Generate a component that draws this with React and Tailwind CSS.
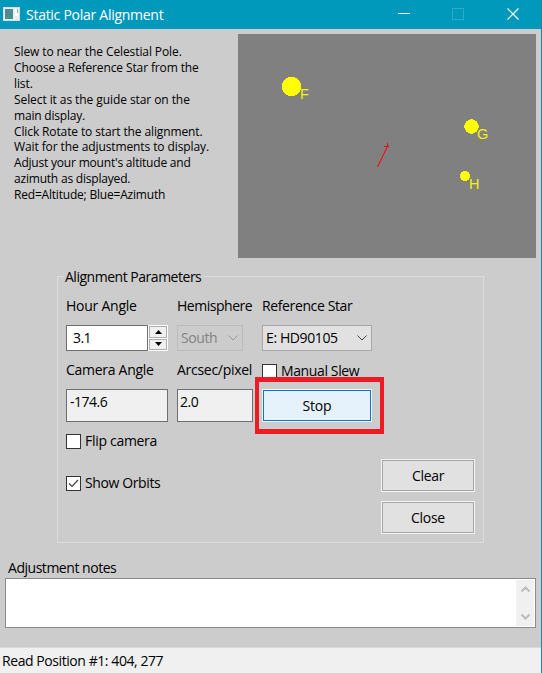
import React from "react";

const instructions = [
  ["Slew to near the Celestial Pole.", "tracking-[-0.1px]"],
  ["Choose a Reference Star from the", "tracking-[-0.12px]"],
  ["list.", "tracking-[-0.1px]"],
  ["Select it as the guide star on the", "tracking-[-0.08px]"],
  ["main display.", "tracking-[-0.2px]"],
  ["Click Rotate to start the alignment.", "tracking-[-0.12px]"],
  ["Wait for the adjustments to display.", "tracking-[-0.1px]"],
  ["Adjust your mount's altitude and", "tracking-[-0.2px]"],
  ["azimuth as displayed.", "tracking-[-0.2px]"],
  ["Red=Altitude; Blue=Azimuth", "tracking-[-0.2px]"],
];

function TitleBar() {
  return (
    <header className="flex h-[29px] shrink-0 items-center bg-[#0099bc] pl-[3px] text-white">
      <svg width="18" height="15" viewBox="0 0 18 15">
        <rect x="0.5" y="0.5" width="16" height="13" fill="#e9eef0" stroke="#d5dde0" />
        <rect x="2" y="2" width="8" height="10" fill="#4a8f88" />
        <rect x="2" y="2" width="4" height="5" fill="#5a7fa5" />
        <rect x="12" y="2" width="3" height="7" fill="#fff" />
        <rect x="14" y="2" width="1" height="4" fill="#9aa" />
      </svg>
      <h1 className="ml-[5px] text-[14px] tracking-[-0.27px]">Static Polar Alignment</h1>
      <svg className="ml-auto mr-[21px]" width="122" height="13" viewBox="0 0 122 13" fill="none">
        <path d="M0 5.500h12" stroke="#fff" />
        <rect x="54.500" y="0.500" width="11" height="11" stroke="#2eabc8" />
        <path d="M109.500 0.500l11 11M120.500 0.500l-11 11" stroke="#fff" strokeWidth="1.2" />
      </svg>
    </header>
  );
}

function StarView() {
  return (
    <svg className="block shrink-0 bg-[#808080]" width="298" height="224" viewBox="0 0 298 224">
      <g fill="#ff0" shapeRendering="crispEdges">
        <circle cx="53.5" cy="52.5" r="9.8" />
        <circle cx="233.5" cy="92.5" r="7.3" />
        <circle cx="227" cy="142" r="5.1" />
      </g>
      <g fill="#ff0" fontFamily="'Liberation Sans', Arial, sans-serif" fontSize="14.5" opacity="0.9">
        <text x="62" y="65">F</text>
        <text x="239" y="105">G</text>
        <text x="231" y="155">H</text>
      </g>
      <path d="M139.500 133L149.500 112.500" stroke="#f01010" strokeWidth="1.1" />
      <path d="M149.500 109v4M146 112.500h5" stroke="#e01010" />
    </svg>
  );
}

function Check({ label, checked, tracking }) {
  return (
    <label className="flex h-[16px] items-center gap-[4px]">
      <span className="flex h-[15px] w-[15px] items-center justify-center border border-[#333] bg-white">
        {checked && (
          <svg width="11" height="9" viewBox="0 0 11 9" fill="none">
            <path d="M1 4.500l3 3L10 1" stroke="#444" strokeWidth="1.2" />
          </svg>
        )}
      </span>
      <span className={tracking}>{label}</span>
    </label>
  );
}

function Chevron({ color }) {
  return (
    <svg width="10" height="6" viewBox="0 0 10 6" fill="none">
      <path d="M0.500 0.500L5 5L9.500 0.500" stroke={color} />
    </svg>
  );
}

function Spinner() {
  return (
    <div className="flex h-[26px] w-[102px]">
      <div className="flex w-[82px] items-center border border-[#6f6f6f] bg-white pl-[6px] tracking-[-0.6px]">3.1</div>
      <div className="flex flex-1 flex-col gap-px bg-white p-px">
        <span className="flex flex-1 items-center justify-center border border-[#adadad] bg-[#f0f0f0]">
          <svg width="7" height="4" viewBox="0 0 7 4"><path d="M0 4L3.500 0L7 4z" /></svg>
        </span>
        <span className="flex flex-1 items-center justify-center border border-[#adadad] bg-[#f0f0f0]">
          <svg width="7" height="4" viewBox="0 0 7 4"><path d="M0 0L3.500 4L7 0z" /></svg>
        </span>
      </div>
    </div>
  );
}

function PushButton({ children }) {
  return (
    <button className="h-[33px] w-[94px] border border-[#f4f4f4] bg-[#e1e1e1]">
      <span className="flex h-full items-center justify-center border border-[#a6a6a6] tracking-[-0.3px]">{children}</span>
    </button>
  );
}

function Parameters() {
  return (
    <fieldset className="ml-[57px] h-[277px] w-[427px] border border-[#dcdcdc] pl-[8px]">
      <legend className="-ml-[2px] h-[20px] px-[1px] leading-[22px] tracking-[-0.48px]">Alignment Parameters</legend>
      <div className="mt-[10px] grid h-[20px] grid-cols-[111px_85px_1fr] leading-[20px]">
        <span className="tracking-[-0.25px]">Hour Angle</span>
        <span className="tracking-[-0.48px]">Hemisphere</span>
        <span className="tracking-[-0.38px]">Reference Star</span>
      </div>
      <div className="mt-[9px] grid h-[26px] grid-cols-[111px_85px_1fr]">
        <Spinner />
        <div className="flex w-[66px] items-center justify-between border border-[#bcbcbc] bg-[#cccccc] pl-[3px] pr-[4px] tracking-[-0.4px] text-[#838383]">
          South <Chevron color="#999" />
        </div>
        <div className="flex w-[110px] items-center justify-between border border-[#a9a9a9] bg-[#e1e1e1] pl-[3px] pr-[4px] tracking-[-0.4px]">
          E: HD90105 <Chevron color="#444" />
        </div>
      </div>
      <div className="mt-[9px] grid h-[20px] grid-cols-[111px_85px_1fr] leading-[20px]">
        <span className="tracking-[-0.28px]">Camera Angle</span>
        <span className="tracking-[-0.28px]">Arcsec/pixel</span>
        <div className="pt-[3px]"><Check label="Manual Slew" tracking="tracking-[-0.38px]" /></div>
      </div>
      <div className="mt-[9px] grid h-[33px] grid-cols-[111px_85px_1fr] leading-[24px]">
        <div className="w-[102px] border border-[#6f6f6f] bg-[#f0f0f0] pl-[3px] tracking-[-0.5px]">-174.6</div>
        <div className="w-[76px] border border-[#6f6f6f] bg-[#f0f0f0] pl-[2px] tracking-[-0.5px]">2.0</div>
        <div className="relative w-[110px]">
          <button className="flex h-[33px] w-[110px] items-center justify-center border border-[#f4f4f4] bg-[#e5f1fb]">
            <span className="flex h-full w-full items-center justify-center border border-[#0078d7] tracking-[-0.2px]">Stop</span>
          </button>
          <div className="absolute -left-[7px] -top-[12px] h-[57px] w-[129px] border-x-4 border-y-[5px] border-[#ed1c24]" />
        </div>
      </div>
      <div className="mt-[11px] flex justify-between pr-[8px]">
        <div className="flex flex-col gap-[26px]">
          <Check label="Flip camera" tracking="tracking-[-0.3px]" />
          <Check label="Show Orbits" tracking="tracking-[-0.38px]" checked />
        </div>
        <div className="flex flex-col gap-[9px] pt-[26px]">
          <PushButton>Clear</PushButton>
          <PushButton>Close</PushButton>
        </div>
      </div>
    </fieldset>
  );
}

export default function App() {
  return (
    <div className="flex h-[673px] w-[542px] flex-col overflow-hidden border-r border-[#0e8ba8] bg-[#cccccc] font-['Open_Sans','Noto_Sans',sans-serif] text-[14px] leading-[20px] text-black">
      <TitleBar />
      <div className="flex h-[237px] shrink-0 pt-[5px]">
        <div className="w-[238px] whitespace-nowrap pl-[14px] pt-[10px] text-[12px] leading-[15.9px]">
          {instructions.map(([line, tracking]) => (
            <p key={line} className={tracking}>{line}</p>
          ))}
        </div>
        <StarView />
      </div>
      <Parameters />
      <div className="mt-[15px] h-[20px] pl-[8px] leading-[20px] tracking-[-0.47px]">Adjustment notes</div>
      <div className="ml-[5px] flex h-[50px] w-[531px] shrink-0 justify-end border border-[#8a8a8a] bg-white p-px">
        <div className="flex w-[18px] flex-col items-center justify-between bg-[#f0f0f0] py-[6px]">
          <svg width="9" height="7" viewBox="0 0 9 7" fill="none"><path d="M0.500 5.500L4.500 1.500L8.500 5.500" stroke="#bcbcbc" strokeWidth="2" /></svg>
          <svg width="9" height="7" viewBox="0 0 9 7" fill="none"><path d="M0.500 1.500L4.500 5.500L8.500 1.500" stroke="#bcbcbc" strokeWidth="2" /></svg>
        </div>
      </div>
      <footer className="mt-auto flex h-[26px] shrink-0 items-center border-t border-[#dadada] bg-[#f0f0f0] pl-[2px] pt-[1px] tracking-[-0.43px]">
        Read Position #1: 404, 277
      </footer>
    </div>
  );
}
